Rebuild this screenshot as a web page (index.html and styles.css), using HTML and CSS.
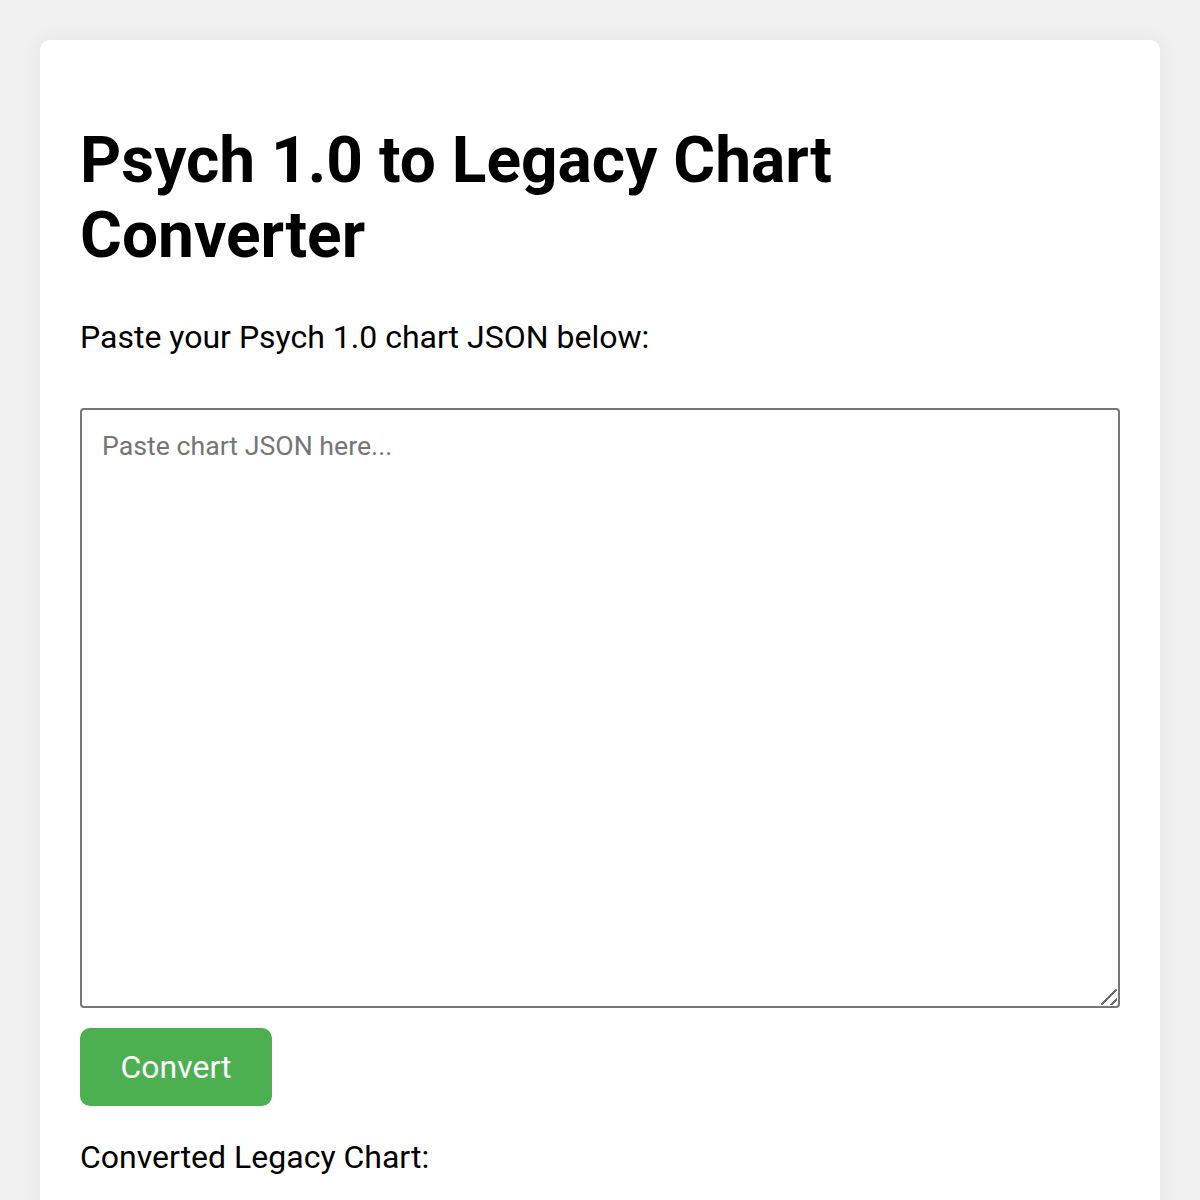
FILE: index.html
```html
<!DOCTYPE html>
<html lang="en">
<head>
<meta charset="utf-8">
<title>Psych 1.0 to Legacy Chart Converter</title>
<link rel="stylesheet" href="styles.css">
</head>
<body>
<div class="card">
  <h1 class="title">Psych 1.0 to Legacy Chart Converter</h1>
  <p class="label">Paste your Psych 1.0 chart JSON below:</p>
  <div class="field">
    <textarea class="input" placeholder="Paste chart JSON here..."></textarea>
    <span class="grip"></span>
  </div>
  <button class="convert">Convert</button>
  <p class="label result">Converted Legacy Chart:</p>
</div>
</body>
</html>
```
FILE: styles.css
```css
html, body {
  margin: 0;
  padding: 0;
}
body {
  background: #f0f0f0;
  font-family: Roboto, "Liberation Sans", Arial, sans-serif;
  padding: 40px;
  color: #000;
}
.card {
  background: #fff;
  border-radius: 10px;
  padding: 40px;
  box-shadow: 0 0 20px rgba(0, 0, 0, 0.06);
  min-height: 1200px;
}
.title {
  font-size: 64px;
  font-weight: 700;
  margin: 43px 0;
  line-height: 75px;
}
.label {
  font-size: 32px;
  margin: 32px 0;
  line-height: 37px;
}
.title + .label {
  margin-top: 46px;
}
.field {
  position: relative;
  margin-top: 52px;
}
.input {
  display: block;
  box-sizing: border-box;
  width: 100%;
  height: 600px;
  padding: 20px;
  border: 2px solid #767676;
  border-radius: 4px;
  font-family: Roboto, "Liberation Sans", Arial, sans-serif;
  font-size: 26.7px;
  resize: none;
}
.input::placeholder {
  color: #757575;
}
.grip {
  position: absolute;
  right: 3px;
  bottom: 3px;
  width: 16px;
  height: 16px;
  background:
    linear-gradient(135deg, transparent 0 46%, #6b6b6b 46% 56%, transparent 56% 100%),
    linear-gradient(135deg, transparent 0 76%, #6b6b6b 76% 86%, transparent 86% 100%);
  pointer-events: none;
}
.convert {
  display: block;
  margin-top: 20px;
  background: #4caf50;
  color: #fff;
  border: none;
  border-radius: 10px;
  padding: 20px 40px;
  font-family: Roboto, "Liberation Sans", Arial, sans-serif;
  font-size: 32px;
  line-height: 38px;
  width: 192px;
}
.result {
  margin-top: 33px;
}
```
